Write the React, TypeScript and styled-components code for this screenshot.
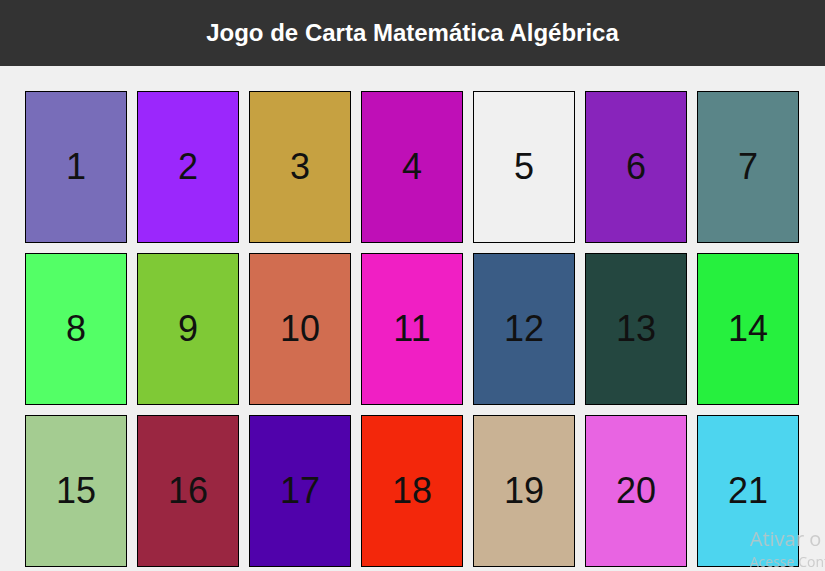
import React from "react";
import styled, { createGlobalStyle } from "styled-components";

const GlobalStyle = createGlobalStyle`
  html, body {
    margin: 0;
    padding: 0;
    background: #f0f0f0;
    font-family: "Liberation Sans", Arial, sans-serif;
    overflow: hidden;
  }
`;

const Page = styled.div`
  min-height: 100vh;
  background: #f0f0f0;
`;

const Header = styled.header`
  height: 66px;
  background: #333333;
  display: flex;
  align-items: center;
  justify-content: center;
`;

const Title = styled.h1`
  margin: 0;
  color: #ffffff;
  font-family: "Liberation Sans", Arial, sans-serif;
  font-weight: bold;
  font-size: 24px;
  letter-spacing: 0;
`;

const Board = styled.main`
  display: flex;
  flex-wrap: wrap;
  justify-content: flex-start;
  gap: 10px;
  padding: 25px 0 25px 25px;
`;

const Card = styled.div<{ $bg: string }>`
  width: 100px;
  height: 150px;
  border: 1px solid #000;
  background: ${(p) => p.$bg};
  display: flex;
  align-items: center;
  justify-content: center;
  font-family: "Liberation Sans", Arial, sans-serif;
  font-size: 36px;
  color: #111;
`;

const Watermark = styled.div`
  position: fixed;
  left: 750px;
  top: 526px;
  white-space: nowrap;
  color: rgba(195, 195, 195, 0.8);
  font-family: "Open Sans", "Noto Sans", sans-serif;
  pointer-events: none;
`;

const WmTitle = styled.div`
  font-size: 20px;
  line-height: 26px;
`;

const WmSub = styled.div`
  font-size: 14px;
  line-height: 20px;
`;

const colors = [
  "#786db9",
  "#9b27fc",
  "#c6a141",
  "#bf0fb7",
  "#f0f0f0",
  "#8824bb",
  "#5a8588",
  "#53ff66",
  "#7fc936",
  "#d16d50",
  "#f01fc4",
  "#3a5c85",
  "#244740",
  "#26f03e",
  "#a4cc91",
  "#9a2641",
  "#5002ab",
  "#f3270b",
  "#c9b294",
  "#e864e2",
  "#4dd5ef",
];

export default function App() {
  return (
    <Page>
      <GlobalStyle />
      <Header>
        <Title>Jogo de Carta Matemática Algébrica</Title>
      </Header>
      <Board>
        {colors.map((c, i) => (
          <Card key={i} $bg={c}>
            {i + 1}
          </Card>
        ))}
      </Board>
      <Watermark>
        <WmTitle>Ativar o Windows</WmTitle>
        <WmSub>Acesse Configurações para ativar o Windows.</WmSub>
      </Watermark>
    </Page>
  );
}
